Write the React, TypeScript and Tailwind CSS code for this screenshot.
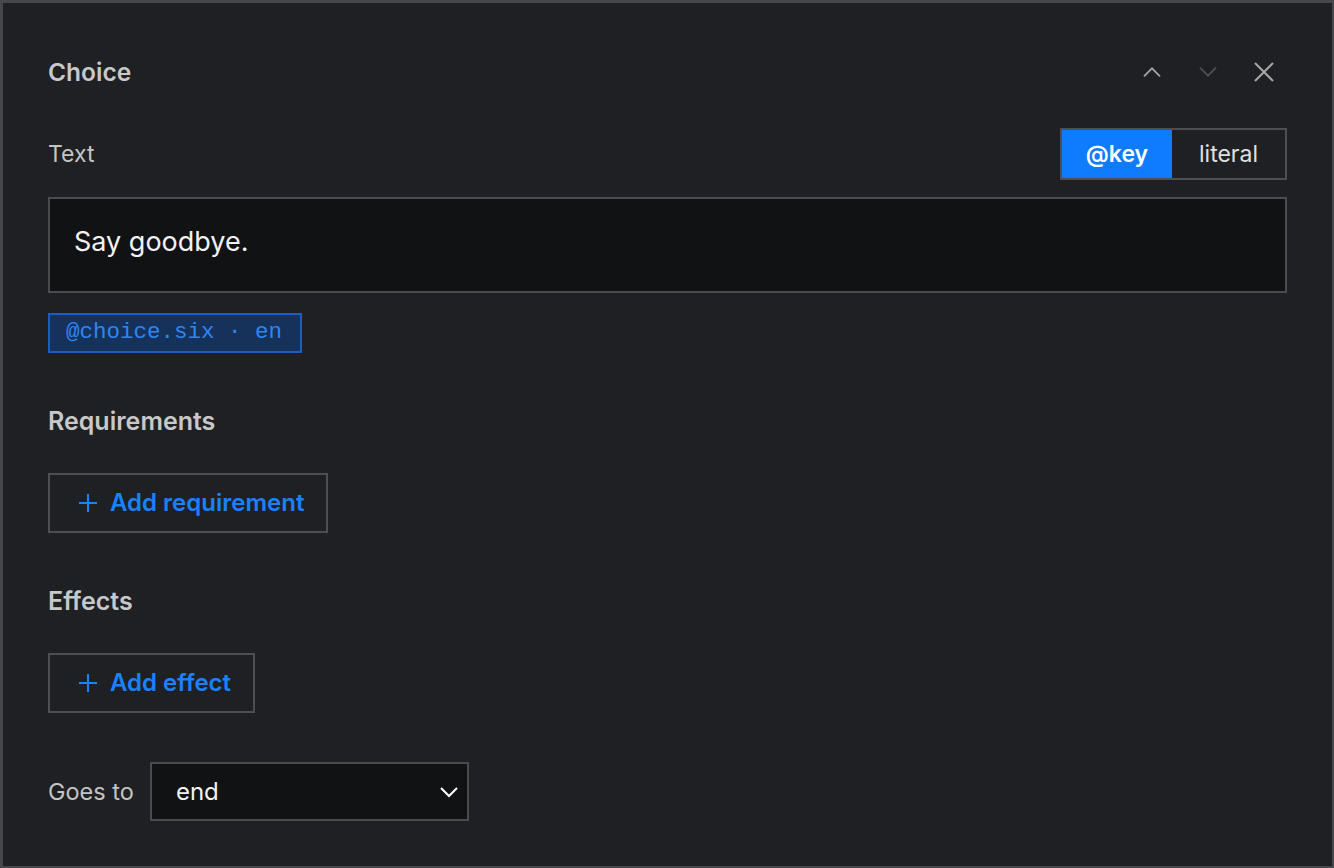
import * as React from 'react'

// Editor panel for one dialogue choice: text key, requirements, effects, target node.

const font = { fontFamily: 'Inter, "Noto Sans", "Liberation Sans", sans-serif' }
const mono = { fontFamily: '"Liberation Mono", "DejaVu Sans Mono", monospace' }

function Chevron({ up, className }: { up?: boolean; className?: string }) {
  return (
    <svg width="22" height="22" viewBox="0 0 24 24" fill="none" className={className}>
      <path
        d={up ? 'M4 16 L12 8 L20 16' : 'M4 8 L12 16 L20 8'}
        stroke="currentColor"
        strokeWidth="2"
        strokeLinecap="square"
      />
    </svg>
  )
}

function Plus() {
  return (
    <svg width="20" height="20" viewBox="0 0 20 20" fill="none">
      <path d="M10 1 V19 M1 10 H19" stroke="currentColor" strokeWidth="2" />
    </svg>
  )
}

function AddButton({ label }: { label: string }) {
  return (
    <button
      type="button"
      className="flex h-[60px] items-center gap-[12px] self-start border-2 border-[#4e4f53] pl-[28px] pr-[22px] text-[24px] font-semibold text-[#1a82ff]"
    >
      <Plus />
      <span>{label}</span>
    </button>
  )
}

export default function App() {
  const [mode, setMode] = React.useState<'key' | 'literal'>('key')

  return (
    <div
      className="flex h-[868px] w-[1334px] flex-col border-t-[3px] border-l-[3px] border-r-[2px] border-b-[2px] border-[#45474b] bg-[#1f2023] pl-[45px] pr-[45px] pt-[49px]"
      style={font}
    >
      {/* Header */}
      <div className="flex h-[40px] items-center justify-between">
        <h1 className="text-[24.5px] font-semibold text-[#c8c8c8]">Choice</h1>
        <div className="flex items-center gap-[34px] pr-[12px]">
          <Chevron up className="text-[#a2a2a2]" />
          <Chevron className="text-[#4d4e52]" />
          <svg width="22" height="22" viewBox="0 0 22 22" fill="none" className="text-[#a8a8a8]">
            <path d="M2 2 L20 20 M20 2 L2 20" stroke="currentColor" strokeWidth="2" />
          </svg>
        </div>
      </div>

      {/* Text field */}
      <div className="mt-[36px] flex h-[52px] items-center justify-between">
        <span className="text-[23px] text-[#c4c4c4]">Text</span>
        <div className="flex h-[52px] border-2 border-[#4e4f53]">
          <button
            type="button"
            onClick={() => setMode('key')}
            className={`w-[110px] text-[23px] ${mode === 'key' ? 'bg-[#0f7bff] font-semibold text-white' : 'text-[#e0e0e0]'}`}
          >
            @key
          </button>
          <button
            type="button"
            onClick={() => setMode('literal')}
            className={`w-[113px] text-[23px] ${mode === 'literal' ? 'bg-[#0f7bff] font-semibold text-white' : 'text-[#e0e0e0]'}`}
          >
            literal
          </button>
        </div>
      </div>

      <div className="mt-[17px] flex h-[96px] items-center border-2 border-[#4a4b4f] bg-[#111214] px-[24px] pb-[6px]">
        <span className="text-[27px] text-[#f2f2f2]">Say goodbye.</span>
      </div>

      <div
        className="mt-[20px] flex h-[40px] items-center self-start border-2 border-[#1a5fbf] bg-[#16325a] pl-[16px] pr-[18px] text-[22.5px] text-[#2f86f2]"
        style={mono}
      >
        @choice.six · en
      </div>

      {/* Requirements */}
      <h2 className="mt-[53px] flex h-[32px] items-center text-[25px] font-semibold text-[#c8c8c8]">
        Requirements
      </h2>
      <div className="mt-[35px] flex">
        <AddButton label="Add requirement" />
      </div>

      {/* Effects */}
      <h2 className="mt-[53px] flex h-[32px] items-center text-[25px] font-semibold text-[#c8c8c8]">
        Effects
      </h2>
      <div className="mt-[35px] flex">
        <AddButton label="Add effect" />
      </div>

      {/* Destination */}
      <div className="mt-[49px] flex items-center gap-[16px]">
        <span className="text-[23.5px] text-[#c4c4c4]">Goes to</span>
        <div className="flex h-[59px] w-[319px] items-center justify-between border-2 border-[#4a4b4f] bg-[#111214] pl-[24px] pr-[8px]">
          <span className="text-[24px] text-[#f2f2f2]">end</span>
          <svg width="20" height="12" viewBox="0 0 20 12" fill="none" className="text-white">
            <path d="M2 2 L10 10 L18 2" stroke="currentColor" strokeWidth="2" />
          </svg>
        </div>
      </div>
    </div>
  )
}
